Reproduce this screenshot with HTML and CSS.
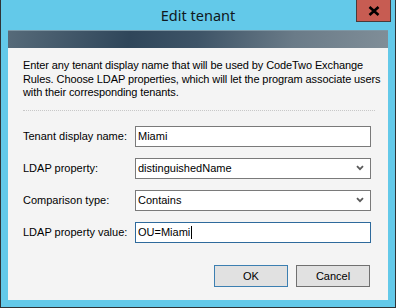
FILE: index.html
```html
<!DOCTYPE html>
<html lang="en">
<head>
    <meta charset="UTF-8">
    <title>Edit tenant</title>
    <link rel="stylesheet" href="styles.css">
</head>
<body>

    <div class="window">
        <!-- Title bar -->
        <div class="titlebar">
            <span class="title">Edit tenant</span>
            <div class="btn-close">
                <svg width="12" height="10" viewBox="0 0 12 10">
                    <path d="M1.5 1 L10.5 9 M10.5 1 L1.5 9" stroke="#000" stroke-width="2.6"/>
                </svg>
            </div>
        </div>

        <div class="client">
            <div class="banner"></div>

            <div class="content">
                <p class="intro">Enter any tenant display name that will be used by CodeTwo Exchange<br>Rules. Choose LDAP properties, which will let the program associate users<br>with their corresponding tenants.</p>
                <div class="separator"></div>

                <div class="form">
                    <div class="row">
                        <span class="label">Tenant display name:</span>
                        <div class="field">Miami</div>
                    </div>
                    <div class="row">
                        <span class="label">LDAP property:</span>
                        <div class="field field-select">
                            <span>distinguishedName</span>
                            <svg class="chevron" width="8" height="6" viewBox="0 0 8 6">
                                <path d="M1 1.2 L4 4.2 L7 1.2" stroke="#5a5a5a" stroke-width="1.8" fill="none"/>
                            </svg>
                        </div>
                    </div>
                    <div class="row">
                        <span class="label">Comparison type:</span>
                        <div class="field field-select">
                            <span>Contains</span>
                            <svg class="chevron" width="8" height="6" viewBox="0 0 8 6">
                                <path d="M1 1.2 L4 4.2 L7 1.2" stroke="#5a5a5a" stroke-width="1.8" fill="none"/>
                            </svg>
                        </div>
                    </div>
                    <div class="row">
                        <span class="label">LDAP property value:</span>
                        <div class="field field-focus">OU=Miami<span class="caret"></span></div>
                    </div>
                </div>

                <div class="buttons">
                    <div class="btn btn-default">OK</div>
                    <div class="btn">Cancel</div>
                </div>
            </div>
        </div>
    </div>

</body>
</html>
```

FILE: styles.css
```css
body {
    margin: 0;
    font-family: "Liberation Sans", Arial, sans-serif;
    font-size: 11px;
    color: #000;
}
.window {
    width: 394px;
    height: 307px;
    background-color: #63c9e9;
    border: 1px solid #2f3336;
    border-top: none;
    display: flex;
    flex-direction: column;
}
.titlebar {
    height: 30px;
    display: flex;
    justify-content: center;
    position: relative;
}
.title {
    font-family: "Noto Sans", sans-serif;
    font-size: 14.5px;
    line-height: 30px;
    color: #101820;
}
.btn-close {
    position: absolute;
    top: 0;
    right: 4px;
    width: 33px;
    height: 21px;
    background-color: #c75c52;
    border: 1px solid #4a3a3a;
    border-top: none;
    display: flex;
    align-items: center;
    justify-content: center;
}
.client {
    margin: 0 7px;
    height: 270px;
    background-color: #f4f4f4;
    display: flex;
    flex-direction: column;
}
.banner {
    height: 17px;
    border-top: 1px solid #7d98a6;
    background: linear-gradient(100deg, #566a79 0%, #2f465a 32%, #3e5467 50%, #6a7b88 75%, #808e98 100%);
}
.content {
    padding: 11px 13px 0 15px;
}
.intro {
    margin: 0;
    line-height: 13.5px;
    white-space: nowrap;
    letter-spacing: -0.1px;
}
.separator {
    margin-top: 10px;
    border-top: 1px dotted #c8c8c8;
}
.form {
    margin-top: 15px;
    margin-right: 4px;
    display: flex;
    flex-direction: column;
    gap: 11px;
}
.row {
    display: flex;
    align-items: center;
}
.label {
    width: 112px;
}
.field {
    flex: 1;
    height: 19px;
    line-height: 19px;
    border: 1px solid #7a7a7a;
    background-color: #fff;
    padding: 0 2px;
    display: flex;
    align-items: center;
}
.field-select {
    justify-content: space-between;
    padding-right: 6px;
}
.field-focus {
    border-color: #2e6a9c;
}
.caret {
    display: inline-block;
    width: 1px;
    height: 13px;
    margin-left: 1px;
    background-color: #000;
}
.buttons {
    margin-top: 22px;
    margin-right: 5px;
    display: flex;
    justify-content: flex-end;
    gap: 8px;
}
.btn {
    width: 72px;
    height: 20px;
    line-height: 20px;
    text-align: center;
    background-color: #e1e1e1;
    border: 1px solid #707070;
}
.btn-default {
    border-color: #3c7fb1;
}
```
